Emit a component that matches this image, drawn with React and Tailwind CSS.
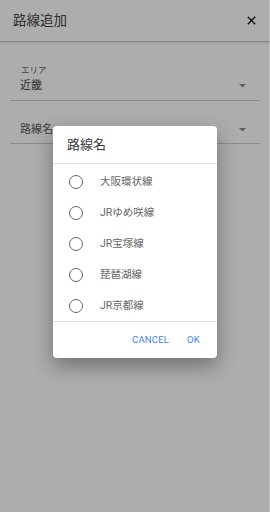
import React from "react";

const items = ["大阪環状線", "JRゆめ咲線", "JR宝塚線", "琵琶湖線", "JR京都線"];

function Caret() {
  return (
    <svg width="7" height="4" viewBox="0 0 7 4" className="shrink-0">
      <path d="M0 0 L7 0 L3.5 3.5 Z" fill="#8a8a8a" />
    </svg>
  );
}

export default function App() {
  return (
    <div
      className="relative w-[270px] h-[512px] overflow-hidden bg-white"
      style={{ fontFamily: "Roboto, 'Noto Sans CJK JP', sans-serif" }}
    >
      <div className="h-[41px] flex items-center justify-between pl-[13px] pr-[14px] bg-white shadow-[0_1px_2px_rgba(0,0,0,0.3)] relative z-10">
        <span className="text-[13.5px] text-[#444]">路線追加</span>
        <svg width="9" height="9" viewBox="0 0 9 9">
          <path d="M0.8 0.8 L8.2 8.2 M8.2 0.8 L0.8 8.2" stroke="#111" strokeWidth="1.3" />
        </svg>
      </div>
      <div className="px-[10px] pt-[23px]">
        <div className="border-b border-[#cfcfcf] pb-[6px]">
          <div className="pl-[11px] text-[8.5px] leading-[12px] text-[#666]">エリア</div>
          <div className="flex items-center justify-between pl-[10px] pr-[14px] mt-[1px]">
            <span className="text-[11px] leading-[17px] text-[#444]">近畿</span>
            <Caret />
          </div>
        </div>
        <div className="border-b border-[#cfcfcf] pb-[5px] mt-[20px]">
          <div className="flex items-center justify-between pl-[10px] pr-[14px]">
            <span className="text-[11px] leading-[17px] text-[#555]">路線名</span>
            <Caret />
          </div>
        </div>
      </div>

      <div className="absolute inset-0 bg-black/[0.32] z-20 border-r border-white/20" />

      <div className="absolute z-30 left-[53px] top-[126px] w-[164px] bg-white rounded-[4px] shadow-[0_8px_20px_rgba(0,0,0,0.35)]">
        <div className="h-[38px] flex items-center pl-[14px] pt-[1px] text-[13px] text-[#3a3a3a] border-b border-[#e2e2e2]">
          路線名
        </div>
        <div className="pt-[2px]">
          {items.map((t) => (
            <div key={t} className="h-[31px] flex items-center">
              <div className="ml-[16px] w-[14px] h-[14px] rounded-full border-[1.5px] border-[#666]" />
              <span className="ml-[17px] text-[10.5px] text-[#666]">{t}</span>
            </div>
          ))}
        </div>
        <div className="border-t border-[#e2e2e2] h-[37px] flex items-center justify-end pr-[17px] gap-[18px] text-[9.5px] text-[#3b82f6] tracking-[0.2px]">
          <span>CANCEL</span>
          <span>OK</span>
        </div>
      </div>
    </div>
  );
}
